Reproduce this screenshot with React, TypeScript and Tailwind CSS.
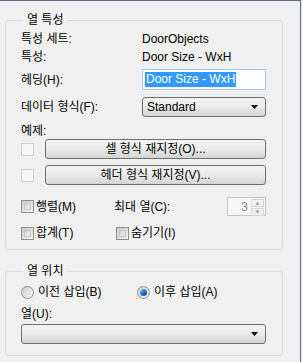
import React from "react";

const font = { fontFamily: '"Liberation Sans", "Noto Sans CJK KR", sans-serif' };

function Check({ disabled = false }: { disabled?: boolean }) {
  return (
    <span
      className={`inline-block w-[13px] h-[13px] border shrink-0 ${
        disabled ? "border-[#cfcfcf] bg-[#f7f7f7]" : "border-[#8e8f8f] bg-gradient-to-br from-[#cbcbcb] to-[#f4f4f4] p-[2px]"
      }`}
    >
      {!disabled && <span className="block w-full h-full border border-[#c8c8c8] bg-gradient-to-br from-[#d6d6d6] to-[#ececec]" />}
    </span>
  );
}

function Radio({ checked = false }: { checked?: boolean }) {
  return (
    <span className="w-[13px] h-[13px] rounded-full border border-[#8e8f8f] bg-gradient-to-br from-[#d0d0d0] to-[#f6f6f6] flex items-center justify-center shrink-0">
      {checked && <span className="w-[7px] h-[7px] rounded-full bg-gradient-to-br from-[#8ad0f8] via-[#1c79c6] to-[#0b3c7a]" />}
    </span>
  );
}

function Arrow() {
  return (
    <svg width="8" height="4" viewBox="0 0 8 4">
      <path d="M0 0h7L3.5 4z" fill="#000" />
    </svg>
  );
}

function Button({ label }: { label: string }) {
  return (
    <button className="flex-1 h-[20px] rounded-[3px] border border-[#707070] bg-gradient-to-b from-[#f3f3f3] via-[#ebebeb] to-[#d3d3d3] text-[12px] leading-none text-black">
      {label}
    </button>
  );
}

export default function App() {
  return (
    <div className="w-[303px] h-[362px] bg-[#f0f0f0] text-black text-[12px] leading-[16px]" style={font}>
      <div className="w-[301px] h-full border-t border-r border-[#5d6b7c] pl-[5px] pr-[17px]">
        {/* 열 특성 */}
        <fieldset className="mt-[11px] border border-[#d5dfe5] rounded-[3px] pl-[15px] pr-[16px] pb-[7px] h-[238px]">
          <legend className="ml-[2px] px-[4px] text-[12px] leading-[16px]">열 특성</legend>
          <div className="flex h-[16px] mt-[3px]">
            <span className="w-[121px]">특성 세트:</span>
            <span>DoorObjects</span>
          </div>
          <div className="flex h-[16px] mt-[2px]">
            <span className="w-[121px]">특성:</span>
            <span>Door Size - WxH</span>
          </div>
          <div className="flex items-center h-[21px] mt-[4px]">
            <span className="w-[121px]">헤딩(H):</span>
            <div className="w-[124px] h-[21px] border border-[#a7c6e8] bg-white flex items-center pl-[2px]">
              <span className="bg-[#3399ff] text-white leading-[15px] px-[1px]">Door Size - WxH</span>
            </div>
          </div>
          <div className="flex items-center h-[20px] mt-[7px]">
            <span className="w-[121px]">데이터 형식(F):</span>
            <div className="w-[124px] h-[20px] rounded-[3px] border border-[#707070] bg-gradient-to-b from-[#f3f3f3] via-[#ebebeb] to-[#d3d3d3] flex items-center justify-between pl-[4px] pr-[6px]">
              <span>Standard</span>
              <Arrow />
            </div>
          </div>
          <div className="h-[16px] mt-[6px]">예제:</div>
          <div className="flex items-center gap-[11px]">
            <Check disabled />
            <Button label="셀 형식 재지정(O)..." />
          </div>
          <div className="flex items-center gap-[11px] mt-[6px]">
            <Check disabled />
            <Button label="헤더 형식 재지정(V)..." />
          </div>
          <div className="flex items-center h-[19px] mt-[12px]">
            <div className="flex items-center gap-[2px] w-[93px]">
              <Check />
              <span>행렬(M)</span>
            </div>
            <span className="flex-1">최대 열(C):</span>
            <div className="w-[39px] h-[19px] border border-[#c5c5c5] bg-[#f7f7f7] flex items-center justify-end">
              <span className="text-[#8a8a8a] pr-[2px]">3</span>
              <div className="w-[15px] h-full flex flex-col gap-[1px] p-[1px]">
                <span className="flex-1 border border-[#d8d8d8] bg-[#f0f0f0] flex items-center justify-center text-[6px] leading-none text-[#a0a0a0]">▲</span>
                <span className="flex-1 border border-[#d8d8d8] bg-[#f0f0f0] flex items-center justify-center text-[6px] leading-none text-[#a0a0a0]">▼</span>
              </div>
            </div>
          </div>
          <div className="flex items-center h-[16px] mt-[9px]">
            <div className="flex items-center gap-[2px] w-[95px]">
              <Check />
              <span>합계(T)</span>
            </div>
            <div className="flex items-center gap-[2px]">
              <Check />
              <span>숨기기(I)</span>
            </div>
          </div>
        </fieldset>

        {/* 열 위치 */}
        <fieldset className="mt-[13px] border border-[#d5dfe5] rounded-[3px] pl-[15px] pr-[16px] h-[93px]">
          <legend className="ml-[2px] px-[4px] text-[12px] leading-[16px]">열 위치</legend>
          <div className="flex items-center h-[16px] mt-[5px]">
            <div className="flex items-center gap-[4px] w-[116px]">
              <Radio />
              <span>이전 삽입(B)</span>
            </div>
            <div className="flex items-center gap-[4px]">
              <Radio checked />
              <span>이후 삽입(A)</span>
            </div>
          </div>
          <div className="h-[16px] mt-[6px]">열(U):</div>
          <div className="h-[20px] mt-[2px] rounded-[3px] border border-[#707070] bg-gradient-to-b from-[#f3f3f3] via-[#ebebeb] to-[#d3d3d3] flex items-center justify-end pr-[6px]">
            <Arrow />
          </div>
        </fieldset>
      </div>
    </div>
  );
}
